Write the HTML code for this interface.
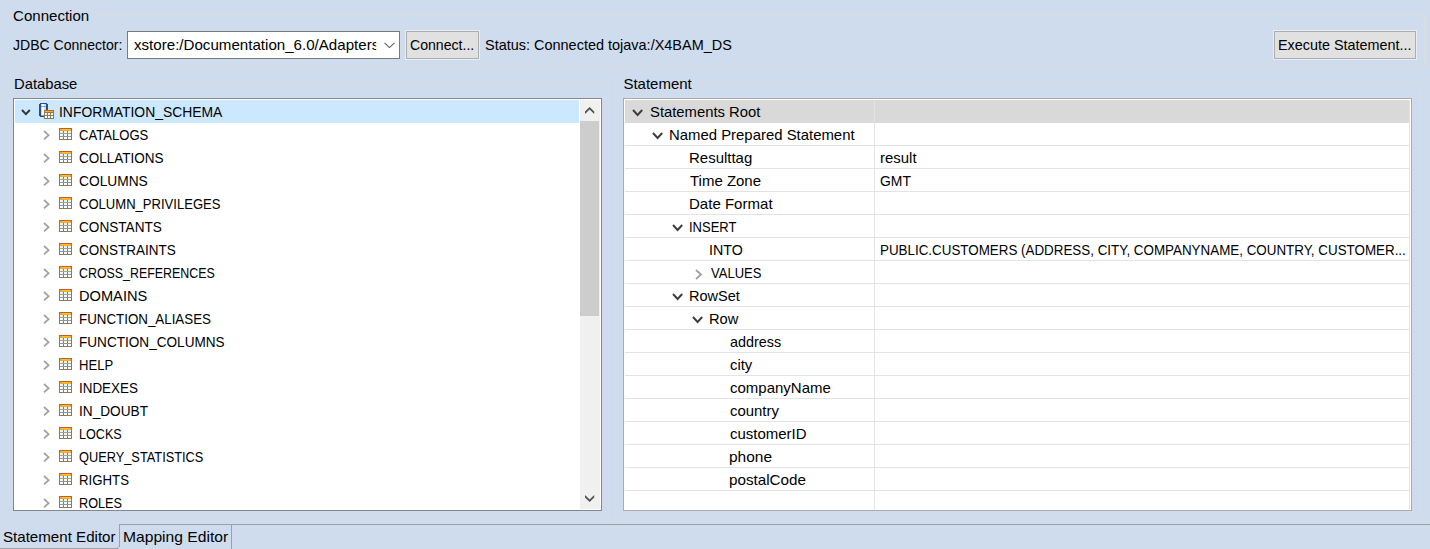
<!DOCTYPE html>
<html><head><meta charset="utf-8"><style>
html,body{margin:0;padding:0;}
body{width:1430px;height:549px;overflow:hidden;position:relative;background:#cedced;font-family:"Liberation Sans",sans-serif;font-size:15px;color:#000;}
div,span,svg{position:absolute;box-sizing:border-box;}
.t{white-space:pre;line-height:23px;height:23px;transform-origin:0 0;}
.gl{background:#dcdcdc;}
</style></head><body>

<div style="left:5px;top:15px;width:8px;height:1px;background:#dcdcdc;"></div>
<div style="left:92px;top:15px;width:1333px;height:1px;background:#dcdcdc;"></div>
<div style="left:5px;top:15px;width:1px;height:52px;background:#dcdcdc;"></div>
<div style="left:1424px;top:15px;width:1px;height:52px;background:#dcdcdc;"></div>
<div style="left:5px;top:66px;width:1420px;height:1px;background:#dcdcdc;"></div>
<div style="left:5px;top:83px;width:8px;height:1px;background:#dcdcdc;"></div>
<div style="left:79px;top:83px;width:531px;height:1px;background:#dcdcdc;"></div>
<div style="left:5px;top:83px;width:1px;height:435px;background:#dcdcdc;"></div>
<div style="left:609px;top:83px;width:1px;height:435px;background:#dcdcdc;"></div>
<div style="left:5px;top:517px;width:605px;height:1px;background:#dcdcdc;"></div>
<div style="left:615px;top:83px;width:7px;height:1px;background:#dcdcdc;"></div>
<div style="left:694px;top:83px;width:726px;height:1px;background:#dcdcdc;"></div>
<div style="left:615px;top:83px;width:1px;height:435px;background:#dcdcdc;"></div>
<div style="left:1419px;top:83px;width:1px;height:435px;background:#dcdcdc;"></div>
<div style="left:615px;top:517px;width:805px;height:1px;background:#dcdcdc;"></div>
<div style="left:127px;top:31px;width:273px;height:28px;background:#fff;border:1px solid #7a7a7a;"></div>
<svg style="left:384px;top:42px" width="11" height="7" viewBox="0 0 11 7"><path d="M0.5 0.8 L5.5 5.6 L10.5 0.8" fill="none" stroke="#606060" stroke-width="1.1"/></svg>
<div style="left:405px;top:30px;width:75px;height:30px;border:1px solid #e9eef4;"></div>
<div style="left:406px;top:31px;width:73px;height:28px;background:#e1e1e1;border:1px solid #adadad;"></div>
<div style="left:1273px;top:30px;width:144px;height:30px;border:1px solid #e9eef4;"></div>
<div style="left:1274px;top:31px;width:142px;height:28px;background:#e1e1e1;border:1px solid #adadad;"></div>
<div style="left:13px;top:98px;width:589px;height:413px;background:#fff;border:1px solid #828790;"></div>
<div style="left:15px;top:100px;width:564px;height:23px;background:#cce8ff;"></div>
<div style="left:580px;top:100px;width:20px;height:409px;background:#f0f0f0;"></div>
<div style="left:580px;top:121px;width:19px;height:195px;background:#cdcdcd;"></div>
<svg style="left:584.8px;top:107px" width="10" height="8" viewBox="0 0 10 8"><polygon points="0,7 4.6,2.6 9.2,7 9.2,4.4 4.6,0 0,4.4" fill="#505050"/></svg>
<svg style="left:584.8px;top:495px" width="10" height="8" viewBox="0 0 10 8"><polygon points="0,0 4.6,4.4 9.2,0 9.2,2.6 4.6,7 0,2.6" fill="#505050"/></svg>
<div style="left:14px;top:99px;width:566px;height:411px;overflow:hidden;">
<svg style="left:5.5px;top:9.2px" width="12" height="8" viewBox="0 0 12 8"><path d="M2 2 L5.9 6.2 L9.8 2" fill="none" stroke="#333" stroke-width="1.9"/></svg>
<svg style="left:25px;top:4px" width="16" height="16" viewBox="0 0 16 16" shape-rendering="crispEdges">
<rect x="0" y="1" width="9" height="12" fill="#2b4c9b"/>
<rect x="1" y="0" width="7" height="14" fill="#2b4c9b"/>
<rect x="2" y="1" width="5" height="12" fill="#c9dbe6"/>
<rect x="3" y="1" width="2" height="12" fill="#ffffff"/>
<rect x="2" y="3" width="5" height="1" fill="#93a9bb"/>
<rect x="2" y="12" width="5" height="1" fill="#7f9fc4"/>
<rect x="5" y="7" width="10" height="9" fill="#8f7a4a"/>
<rect x="5" y="7" width="10" height="1" fill="#b8662a"/>
<rect x="6" y="8" width="8" height="1" fill="#f6b02a"/>
<rect x="6" y="10" width="2" height="2" fill="#eef8fc"/><rect x="9" y="10" width="2" height="2" fill="#eef8fc"/><rect x="12" y="10" width="2" height="2" fill="#eef8fc"/>
<rect x="6" y="13" width="2" height="2" fill="#fff"/><rect x="9" y="13" width="2" height="2" fill="#fff"/><rect x="12" y="13" width="2" height="2" fill="#fff"/>
</svg>
<svg style="left:28.1px;top:30.3px" width="9" height="12" viewBox="0 0 9 12"><path d="M2 2 L6.6 6.2 L2 10.4" fill="none" stroke="#a3a3a3" stroke-width="1.8"/></svg>
<svg style="left:45px;top:29px" width="13" height="12" viewBox="0 0 13 12" shape-rendering="crispEdges">
<rect x="0" y="0" width="13" height="12" fill="#8c7c52"/>
<rect x="1" y="5" width="11" height="1" fill="#b3a274"/>
<rect x="1" y="8" width="11" height="1" fill="#8e94a6"/>
<rect x="0" y="0" width="13" height="1" fill="#c0602a"/>
<rect x="1" y="1" width="11" height="2" fill="#f7a928"/>
<rect x="3" y="1" width="8" height="1" fill="#fbbf3a"/>
<rect x="1" y="3" width="3" height="2" fill="#e4f6fd"/><rect x="5" y="3" width="3" height="2" fill="#e4f6fd"/><rect x="9" y="3" width="3" height="2" fill="#e4f6fd"/>
<rect x="1" y="6" width="3" height="2" fill="#f0f9fc"/><rect x="5" y="6" width="3" height="2" fill="#f0f9fc"/><rect x="9" y="6" width="3" height="2" fill="#f0f9fc"/>
<rect x="1" y="9" width="3" height="2" fill="#fff"/><rect x="5" y="9" width="3" height="2" fill="#fff"/><rect x="9" y="9" width="3" height="2" fill="#fff"/>
</svg>
<svg style="left:28.1px;top:53.3px" width="9" height="12" viewBox="0 0 9 12"><path d="M2 2 L6.6 6.2 L2 10.4" fill="none" stroke="#a3a3a3" stroke-width="1.8"/></svg>
<svg style="left:45px;top:52px" width="13" height="12" viewBox="0 0 13 12" shape-rendering="crispEdges">
<rect x="0" y="0" width="13" height="12" fill="#8c7c52"/>
<rect x="1" y="5" width="11" height="1" fill="#b3a274"/>
<rect x="1" y="8" width="11" height="1" fill="#8e94a6"/>
<rect x="0" y="0" width="13" height="1" fill="#c0602a"/>
<rect x="1" y="1" width="11" height="2" fill="#f7a928"/>
<rect x="3" y="1" width="8" height="1" fill="#fbbf3a"/>
<rect x="1" y="3" width="3" height="2" fill="#e4f6fd"/><rect x="5" y="3" width="3" height="2" fill="#e4f6fd"/><rect x="9" y="3" width="3" height="2" fill="#e4f6fd"/>
<rect x="1" y="6" width="3" height="2" fill="#f0f9fc"/><rect x="5" y="6" width="3" height="2" fill="#f0f9fc"/><rect x="9" y="6" width="3" height="2" fill="#f0f9fc"/>
<rect x="1" y="9" width="3" height="2" fill="#fff"/><rect x="5" y="9" width="3" height="2" fill="#fff"/><rect x="9" y="9" width="3" height="2" fill="#fff"/>
</svg>
<svg style="left:28.1px;top:76.3px" width="9" height="12" viewBox="0 0 9 12"><path d="M2 2 L6.6 6.2 L2 10.4" fill="none" stroke="#a3a3a3" stroke-width="1.8"/></svg>
<svg style="left:45px;top:75px" width="13" height="12" viewBox="0 0 13 12" shape-rendering="crispEdges">
<rect x="0" y="0" width="13" height="12" fill="#8c7c52"/>
<rect x="1" y="5" width="11" height="1" fill="#b3a274"/>
<rect x="1" y="8" width="11" height="1" fill="#8e94a6"/>
<rect x="0" y="0" width="13" height="1" fill="#c0602a"/>
<rect x="1" y="1" width="11" height="2" fill="#f7a928"/>
<rect x="3" y="1" width="8" height="1" fill="#fbbf3a"/>
<rect x="1" y="3" width="3" height="2" fill="#e4f6fd"/><rect x="5" y="3" width="3" height="2" fill="#e4f6fd"/><rect x="9" y="3" width="3" height="2" fill="#e4f6fd"/>
<rect x="1" y="6" width="3" height="2" fill="#f0f9fc"/><rect x="5" y="6" width="3" height="2" fill="#f0f9fc"/><rect x="9" y="6" width="3" height="2" fill="#f0f9fc"/>
<rect x="1" y="9" width="3" height="2" fill="#fff"/><rect x="5" y="9" width="3" height="2" fill="#fff"/><rect x="9" y="9" width="3" height="2" fill="#fff"/>
</svg>
<svg style="left:28.1px;top:99.3px" width="9" height="12" viewBox="0 0 9 12"><path d="M2 2 L6.6 6.2 L2 10.4" fill="none" stroke="#a3a3a3" stroke-width="1.8"/></svg>
<svg style="left:45px;top:98px" width="13" height="12" viewBox="0 0 13 12" shape-rendering="crispEdges">
<rect x="0" y="0" width="13" height="12" fill="#8c7c52"/>
<rect x="1" y="5" width="11" height="1" fill="#b3a274"/>
<rect x="1" y="8" width="11" height="1" fill="#8e94a6"/>
<rect x="0" y="0" width="13" height="1" fill="#c0602a"/>
<rect x="1" y="1" width="11" height="2" fill="#f7a928"/>
<rect x="3" y="1" width="8" height="1" fill="#fbbf3a"/>
<rect x="1" y="3" width="3" height="2" fill="#e4f6fd"/><rect x="5" y="3" width="3" height="2" fill="#e4f6fd"/><rect x="9" y="3" width="3" height="2" fill="#e4f6fd"/>
<rect x="1" y="6" width="3" height="2" fill="#f0f9fc"/><rect x="5" y="6" width="3" height="2" fill="#f0f9fc"/><rect x="9" y="6" width="3" height="2" fill="#f0f9fc"/>
<rect x="1" y="9" width="3" height="2" fill="#fff"/><rect x="5" y="9" width="3" height="2" fill="#fff"/><rect x="9" y="9" width="3" height="2" fill="#fff"/>
</svg>
<svg style="left:28.1px;top:122.3px" width="9" height="12" viewBox="0 0 9 12"><path d="M2 2 L6.6 6.2 L2 10.4" fill="none" stroke="#a3a3a3" stroke-width="1.8"/></svg>
<svg style="left:45px;top:121px" width="13" height="12" viewBox="0 0 13 12" shape-rendering="crispEdges">
<rect x="0" y="0" width="13" height="12" fill="#8c7c52"/>
<rect x="1" y="5" width="11" height="1" fill="#b3a274"/>
<rect x="1" y="8" width="11" height="1" fill="#8e94a6"/>
<rect x="0" y="0" width="13" height="1" fill="#c0602a"/>
<rect x="1" y="1" width="11" height="2" fill="#f7a928"/>
<rect x="3" y="1" width="8" height="1" fill="#fbbf3a"/>
<rect x="1" y="3" width="3" height="2" fill="#e4f6fd"/><rect x="5" y="3" width="3" height="2" fill="#e4f6fd"/><rect x="9" y="3" width="3" height="2" fill="#e4f6fd"/>
<rect x="1" y="6" width="3" height="2" fill="#f0f9fc"/><rect x="5" y="6" width="3" height="2" fill="#f0f9fc"/><rect x="9" y="6" width="3" height="2" fill="#f0f9fc"/>
<rect x="1" y="9" width="3" height="2" fill="#fff"/><rect x="5" y="9" width="3" height="2" fill="#fff"/><rect x="9" y="9" width="3" height="2" fill="#fff"/>
</svg>
<svg style="left:28.1px;top:145.3px" width="9" height="12" viewBox="0 0 9 12"><path d="M2 2 L6.6 6.2 L2 10.4" fill="none" stroke="#a3a3a3" stroke-width="1.8"/></svg>
<svg style="left:45px;top:144px" width="13" height="12" viewBox="0 0 13 12" shape-rendering="crispEdges">
<rect x="0" y="0" width="13" height="12" fill="#8c7c52"/>
<rect x="1" y="5" width="11" height="1" fill="#b3a274"/>
<rect x="1" y="8" width="11" height="1" fill="#8e94a6"/>
<rect x="0" y="0" width="13" height="1" fill="#c0602a"/>
<rect x="1" y="1" width="11" height="2" fill="#f7a928"/>
<rect x="3" y="1" width="8" height="1" fill="#fbbf3a"/>
<rect x="1" y="3" width="3" height="2" fill="#e4f6fd"/><rect x="5" y="3" width="3" height="2" fill="#e4f6fd"/><rect x="9" y="3" width="3" height="2" fill="#e4f6fd"/>
<rect x="1" y="6" width="3" height="2" fill="#f0f9fc"/><rect x="5" y="6" width="3" height="2" fill="#f0f9fc"/><rect x="9" y="6" width="3" height="2" fill="#f0f9fc"/>
<rect x="1" y="9" width="3" height="2" fill="#fff"/><rect x="5" y="9" width="3" height="2" fill="#fff"/><rect x="9" y="9" width="3" height="2" fill="#fff"/>
</svg>
<svg style="left:28.1px;top:168.3px" width="9" height="12" viewBox="0 0 9 12"><path d="M2 2 L6.6 6.2 L2 10.4" fill="none" stroke="#a3a3a3" stroke-width="1.8"/></svg>
<svg style="left:45px;top:167px" width="13" height="12" viewBox="0 0 13 12" shape-rendering="crispEdges">
<rect x="0" y="0" width="13" height="12" fill="#8c7c52"/>
<rect x="1" y="5" width="11" height="1" fill="#b3a274"/>
<rect x="1" y="8" width="11" height="1" fill="#8e94a6"/>
<rect x="0" y="0" width="13" height="1" fill="#c0602a"/>
<rect x="1" y="1" width="11" height="2" fill="#f7a928"/>
<rect x="3" y="1" width="8" height="1" fill="#fbbf3a"/>
<rect x="1" y="3" width="3" height="2" fill="#e4f6fd"/><rect x="5" y="3" width="3" height="2" fill="#e4f6fd"/><rect x="9" y="3" width="3" height="2" fill="#e4f6fd"/>
<rect x="1" y="6" width="3" height="2" fill="#f0f9fc"/><rect x="5" y="6" width="3" height="2" fill="#f0f9fc"/><rect x="9" y="6" width="3" height="2" fill="#f0f9fc"/>
<rect x="1" y="9" width="3" height="2" fill="#fff"/><rect x="5" y="9" width="3" height="2" fill="#fff"/><rect x="9" y="9" width="3" height="2" fill="#fff"/>
</svg>
<svg style="left:28.1px;top:191.3px" width="9" height="12" viewBox="0 0 9 12"><path d="M2 2 L6.6 6.2 L2 10.4" fill="none" stroke="#a3a3a3" stroke-width="1.8"/></svg>
<svg style="left:45px;top:190px" width="13" height="12" viewBox="0 0 13 12" shape-rendering="crispEdges">
<rect x="0" y="0" width="13" height="12" fill="#8c7c52"/>
<rect x="1" y="5" width="11" height="1" fill="#b3a274"/>
<rect x="1" y="8" width="11" height="1" fill="#8e94a6"/>
<rect x="0" y="0" width="13" height="1" fill="#c0602a"/>
<rect x="1" y="1" width="11" height="2" fill="#f7a928"/>
<rect x="3" y="1" width="8" height="1" fill="#fbbf3a"/>
<rect x="1" y="3" width="3" height="2" fill="#e4f6fd"/><rect x="5" y="3" width="3" height="2" fill="#e4f6fd"/><rect x="9" y="3" width="3" height="2" fill="#e4f6fd"/>
<rect x="1" y="6" width="3" height="2" fill="#f0f9fc"/><rect x="5" y="6" width="3" height="2" fill="#f0f9fc"/><rect x="9" y="6" width="3" height="2" fill="#f0f9fc"/>
<rect x="1" y="9" width="3" height="2" fill="#fff"/><rect x="5" y="9" width="3" height="2" fill="#fff"/><rect x="9" y="9" width="3" height="2" fill="#fff"/>
</svg>
<svg style="left:28.1px;top:214.3px" width="9" height="12" viewBox="0 0 9 12"><path d="M2 2 L6.6 6.2 L2 10.4" fill="none" stroke="#a3a3a3" stroke-width="1.8"/></svg>
<svg style="left:45px;top:213px" width="13" height="12" viewBox="0 0 13 12" shape-rendering="crispEdges">
<rect x="0" y="0" width="13" height="12" fill="#8c7c52"/>
<rect x="1" y="5" width="11" height="1" fill="#b3a274"/>
<rect x="1" y="8" width="11" height="1" fill="#8e94a6"/>
<rect x="0" y="0" width="13" height="1" fill="#c0602a"/>
<rect x="1" y="1" width="11" height="2" fill="#f7a928"/>
<rect x="3" y="1" width="8" height="1" fill="#fbbf3a"/>
<rect x="1" y="3" width="3" height="2" fill="#e4f6fd"/><rect x="5" y="3" width="3" height="2" fill="#e4f6fd"/><rect x="9" y="3" width="3" height="2" fill="#e4f6fd"/>
<rect x="1" y="6" width="3" height="2" fill="#f0f9fc"/><rect x="5" y="6" width="3" height="2" fill="#f0f9fc"/><rect x="9" y="6" width="3" height="2" fill="#f0f9fc"/>
<rect x="1" y="9" width="3" height="2" fill="#fff"/><rect x="5" y="9" width="3" height="2" fill="#fff"/><rect x="9" y="9" width="3" height="2" fill="#fff"/>
</svg>
<svg style="left:28.1px;top:237.3px" width="9" height="12" viewBox="0 0 9 12"><path d="M2 2 L6.6 6.2 L2 10.4" fill="none" stroke="#a3a3a3" stroke-width="1.8"/></svg>
<svg style="left:45px;top:236px" width="13" height="12" viewBox="0 0 13 12" shape-rendering="crispEdges">
<rect x="0" y="0" width="13" height="12" fill="#8c7c52"/>
<rect x="1" y="5" width="11" height="1" fill="#b3a274"/>
<rect x="1" y="8" width="11" height="1" fill="#8e94a6"/>
<rect x="0" y="0" width="13" height="1" fill="#c0602a"/>
<rect x="1" y="1" width="11" height="2" fill="#f7a928"/>
<rect x="3" y="1" width="8" height="1" fill="#fbbf3a"/>
<rect x="1" y="3" width="3" height="2" fill="#e4f6fd"/><rect x="5" y="3" width="3" height="2" fill="#e4f6fd"/><rect x="9" y="3" width="3" height="2" fill="#e4f6fd"/>
<rect x="1" y="6" width="3" height="2" fill="#f0f9fc"/><rect x="5" y="6" width="3" height="2" fill="#f0f9fc"/><rect x="9" y="6" width="3" height="2" fill="#f0f9fc"/>
<rect x="1" y="9" width="3" height="2" fill="#fff"/><rect x="5" y="9" width="3" height="2" fill="#fff"/><rect x="9" y="9" width="3" height="2" fill="#fff"/>
</svg>
<svg style="left:28.1px;top:260.3px" width="9" height="12" viewBox="0 0 9 12"><path d="M2 2 L6.6 6.2 L2 10.4" fill="none" stroke="#a3a3a3" stroke-width="1.8"/></svg>
<svg style="left:45px;top:259px" width="13" height="12" viewBox="0 0 13 12" shape-rendering="crispEdges">
<rect x="0" y="0" width="13" height="12" fill="#8c7c52"/>
<rect x="1" y="5" width="11" height="1" fill="#b3a274"/>
<rect x="1" y="8" width="11" height="1" fill="#8e94a6"/>
<rect x="0" y="0" width="13" height="1" fill="#c0602a"/>
<rect x="1" y="1" width="11" height="2" fill="#f7a928"/>
<rect x="3" y="1" width="8" height="1" fill="#fbbf3a"/>
<rect x="1" y="3" width="3" height="2" fill="#e4f6fd"/><rect x="5" y="3" width="3" height="2" fill="#e4f6fd"/><rect x="9" y="3" width="3" height="2" fill="#e4f6fd"/>
<rect x="1" y="6" width="3" height="2" fill="#f0f9fc"/><rect x="5" y="6" width="3" height="2" fill="#f0f9fc"/><rect x="9" y="6" width="3" height="2" fill="#f0f9fc"/>
<rect x="1" y="9" width="3" height="2" fill="#fff"/><rect x="5" y="9" width="3" height="2" fill="#fff"/><rect x="9" y="9" width="3" height="2" fill="#fff"/>
</svg>
<svg style="left:28.1px;top:283.3px" width="9" height="12" viewBox="0 0 9 12"><path d="M2 2 L6.6 6.2 L2 10.4" fill="none" stroke="#a3a3a3" stroke-width="1.8"/></svg>
<svg style="left:45px;top:282px" width="13" height="12" viewBox="0 0 13 12" shape-rendering="crispEdges">
<rect x="0" y="0" width="13" height="12" fill="#8c7c52"/>
<rect x="1" y="5" width="11" height="1" fill="#b3a274"/>
<rect x="1" y="8" width="11" height="1" fill="#8e94a6"/>
<rect x="0" y="0" width="13" height="1" fill="#c0602a"/>
<rect x="1" y="1" width="11" height="2" fill="#f7a928"/>
<rect x="3" y="1" width="8" height="1" fill="#fbbf3a"/>
<rect x="1" y="3" width="3" height="2" fill="#e4f6fd"/><rect x="5" y="3" width="3" height="2" fill="#e4f6fd"/><rect x="9" y="3" width="3" height="2" fill="#e4f6fd"/>
<rect x="1" y="6" width="3" height="2" fill="#f0f9fc"/><rect x="5" y="6" width="3" height="2" fill="#f0f9fc"/><rect x="9" y="6" width="3" height="2" fill="#f0f9fc"/>
<rect x="1" y="9" width="3" height="2" fill="#fff"/><rect x="5" y="9" width="3" height="2" fill="#fff"/><rect x="9" y="9" width="3" height="2" fill="#fff"/>
</svg>
<svg style="left:28.1px;top:306.3px" width="9" height="12" viewBox="0 0 9 12"><path d="M2 2 L6.6 6.2 L2 10.4" fill="none" stroke="#a3a3a3" stroke-width="1.8"/></svg>
<svg style="left:45px;top:305px" width="13" height="12" viewBox="0 0 13 12" shape-rendering="crispEdges">
<rect x="0" y="0" width="13" height="12" fill="#8c7c52"/>
<rect x="1" y="5" width="11" height="1" fill="#b3a274"/>
<rect x="1" y="8" width="11" height="1" fill="#8e94a6"/>
<rect x="0" y="0" width="13" height="1" fill="#c0602a"/>
<rect x="1" y="1" width="11" height="2" fill="#f7a928"/>
<rect x="3" y="1" width="8" height="1" fill="#fbbf3a"/>
<rect x="1" y="3" width="3" height="2" fill="#e4f6fd"/><rect x="5" y="3" width="3" height="2" fill="#e4f6fd"/><rect x="9" y="3" width="3" height="2" fill="#e4f6fd"/>
<rect x="1" y="6" width="3" height="2" fill="#f0f9fc"/><rect x="5" y="6" width="3" height="2" fill="#f0f9fc"/><rect x="9" y="6" width="3" height="2" fill="#f0f9fc"/>
<rect x="1" y="9" width="3" height="2" fill="#fff"/><rect x="5" y="9" width="3" height="2" fill="#fff"/><rect x="9" y="9" width="3" height="2" fill="#fff"/>
</svg>
<svg style="left:28.1px;top:329.3px" width="9" height="12" viewBox="0 0 9 12"><path d="M2 2 L6.6 6.2 L2 10.4" fill="none" stroke="#a3a3a3" stroke-width="1.8"/></svg>
<svg style="left:45px;top:328px" width="13" height="12" viewBox="0 0 13 12" shape-rendering="crispEdges">
<rect x="0" y="0" width="13" height="12" fill="#8c7c52"/>
<rect x="1" y="5" width="11" height="1" fill="#b3a274"/>
<rect x="1" y="8" width="11" height="1" fill="#8e94a6"/>
<rect x="0" y="0" width="13" height="1" fill="#c0602a"/>
<rect x="1" y="1" width="11" height="2" fill="#f7a928"/>
<rect x="3" y="1" width="8" height="1" fill="#fbbf3a"/>
<rect x="1" y="3" width="3" height="2" fill="#e4f6fd"/><rect x="5" y="3" width="3" height="2" fill="#e4f6fd"/><rect x="9" y="3" width="3" height="2" fill="#e4f6fd"/>
<rect x="1" y="6" width="3" height="2" fill="#f0f9fc"/><rect x="5" y="6" width="3" height="2" fill="#f0f9fc"/><rect x="9" y="6" width="3" height="2" fill="#f0f9fc"/>
<rect x="1" y="9" width="3" height="2" fill="#fff"/><rect x="5" y="9" width="3" height="2" fill="#fff"/><rect x="9" y="9" width="3" height="2" fill="#fff"/>
</svg>
<svg style="left:28.1px;top:352.3px" width="9" height="12" viewBox="0 0 9 12"><path d="M2 2 L6.6 6.2 L2 10.4" fill="none" stroke="#a3a3a3" stroke-width="1.8"/></svg>
<svg style="left:45px;top:351px" width="13" height="12" viewBox="0 0 13 12" shape-rendering="crispEdges">
<rect x="0" y="0" width="13" height="12" fill="#8c7c52"/>
<rect x="1" y="5" width="11" height="1" fill="#b3a274"/>
<rect x="1" y="8" width="11" height="1" fill="#8e94a6"/>
<rect x="0" y="0" width="13" height="1" fill="#c0602a"/>
<rect x="1" y="1" width="11" height="2" fill="#f7a928"/>
<rect x="3" y="1" width="8" height="1" fill="#fbbf3a"/>
<rect x="1" y="3" width="3" height="2" fill="#e4f6fd"/><rect x="5" y="3" width="3" height="2" fill="#e4f6fd"/><rect x="9" y="3" width="3" height="2" fill="#e4f6fd"/>
<rect x="1" y="6" width="3" height="2" fill="#f0f9fc"/><rect x="5" y="6" width="3" height="2" fill="#f0f9fc"/><rect x="9" y="6" width="3" height="2" fill="#f0f9fc"/>
<rect x="1" y="9" width="3" height="2" fill="#fff"/><rect x="5" y="9" width="3" height="2" fill="#fff"/><rect x="9" y="9" width="3" height="2" fill="#fff"/>
</svg>
<svg style="left:28.1px;top:375.3px" width="9" height="12" viewBox="0 0 9 12"><path d="M2 2 L6.6 6.2 L2 10.4" fill="none" stroke="#a3a3a3" stroke-width="1.8"/></svg>
<svg style="left:45px;top:374px" width="13" height="12" viewBox="0 0 13 12" shape-rendering="crispEdges">
<rect x="0" y="0" width="13" height="12" fill="#8c7c52"/>
<rect x="1" y="5" width="11" height="1" fill="#b3a274"/>
<rect x="1" y="8" width="11" height="1" fill="#8e94a6"/>
<rect x="0" y="0" width="13" height="1" fill="#c0602a"/>
<rect x="1" y="1" width="11" height="2" fill="#f7a928"/>
<rect x="3" y="1" width="8" height="1" fill="#fbbf3a"/>
<rect x="1" y="3" width="3" height="2" fill="#e4f6fd"/><rect x="5" y="3" width="3" height="2" fill="#e4f6fd"/><rect x="9" y="3" width="3" height="2" fill="#e4f6fd"/>
<rect x="1" y="6" width="3" height="2" fill="#f0f9fc"/><rect x="5" y="6" width="3" height="2" fill="#f0f9fc"/><rect x="9" y="6" width="3" height="2" fill="#f0f9fc"/>
<rect x="1" y="9" width="3" height="2" fill="#fff"/><rect x="5" y="9" width="3" height="2" fill="#fff"/><rect x="9" y="9" width="3" height="2" fill="#fff"/>
</svg>
<svg style="left:28.1px;top:398.3px" width="9" height="12" viewBox="0 0 9 12"><path d="M2 2 L6.6 6.2 L2 10.4" fill="none" stroke="#a3a3a3" stroke-width="1.8"/></svg>
<svg style="left:45px;top:397px" width="13" height="12" viewBox="0 0 13 12" shape-rendering="crispEdges">
<rect x="0" y="0" width="13" height="12" fill="#8c7c52"/>
<rect x="1" y="5" width="11" height="1" fill="#b3a274"/>
<rect x="1" y="8" width="11" height="1" fill="#8e94a6"/>
<rect x="0" y="0" width="13" height="1" fill="#c0602a"/>
<rect x="1" y="1" width="11" height="2" fill="#f7a928"/>
<rect x="3" y="1" width="8" height="1" fill="#fbbf3a"/>
<rect x="1" y="3" width="3" height="2" fill="#e4f6fd"/><rect x="5" y="3" width="3" height="2" fill="#e4f6fd"/><rect x="9" y="3" width="3" height="2" fill="#e4f6fd"/>
<rect x="1" y="6" width="3" height="2" fill="#f0f9fc"/><rect x="5" y="6" width="3" height="2" fill="#f0f9fc"/><rect x="9" y="6" width="3" height="2" fill="#f0f9fc"/>
<rect x="1" y="9" width="3" height="2" fill="#fff"/><rect x="5" y="9" width="3" height="2" fill="#fff"/><rect x="9" y="9" width="3" height="2" fill="#fff"/>
</svg>
</div>
<div style="left:623px;top:98px;width:789px;height:413px;background:#fff;border:1px solid #ababab;"></div>
<div style="left:624px;top:99px;width:787px;height:411px;overflow:hidden;">
<div style="left:1px;top:1px;width:784px;height:23px;background:#d9d9d9;"></div>
<div style="left:1px;top:46px;width:785px;height:1px;background:#e3e3e3;"></div>
<div style="left:1px;top:69px;width:785px;height:1px;background:#e3e3e3;"></div>
<div style="left:1px;top:92px;width:785px;height:1px;background:#e3e3e3;"></div>
<div style="left:1px;top:115px;width:785px;height:1px;background:#e3e3e3;"></div>
<div style="left:1px;top:138px;width:785px;height:1px;background:#e3e3e3;"></div>
<div style="left:1px;top:161px;width:785px;height:1px;background:#e3e3e3;"></div>
<div style="left:1px;top:184px;width:785px;height:1px;background:#e3e3e3;"></div>
<div style="left:1px;top:207px;width:785px;height:1px;background:#e3e3e3;"></div>
<div style="left:1px;top:230px;width:785px;height:1px;background:#e3e3e3;"></div>
<div style="left:1px;top:253px;width:785px;height:1px;background:#e3e3e3;"></div>
<div style="left:1px;top:276px;width:785px;height:1px;background:#e3e3e3;"></div>
<div style="left:1px;top:299px;width:785px;height:1px;background:#e3e3e3;"></div>
<div style="left:1px;top:322px;width:785px;height:1px;background:#e3e3e3;"></div>
<div style="left:1px;top:345px;width:785px;height:1px;background:#e3e3e3;"></div>
<div style="left:1px;top:368px;width:785px;height:1px;background:#e3e3e3;"></div>
<div style="left:1px;top:391px;width:785px;height:1px;background:#e3e3e3;"></div>
<div style="left:1px;top:414px;width:785px;height:1px;background:#e3e3e3;"></div>
<div style="left:250px;top:1px;width:1px;height:411px;background:#e3e3e3;"></div>
<div style="left:785px;top:1px;width:1px;height:409px;background:#e3e3e3;"></div>
<svg style="left:6.9px;top:8.5px" width="13" height="9" viewBox="0 0 13 9"><path d="M2 2 L6.6 7.0 L11.2 2" fill="none" stroke="#3c3c3c" stroke-width="1.9"/></svg>
<svg style="left:26.9px;top:31.5px" width="13" height="9" viewBox="0 0 13 9"><path d="M2 2 L6.6 7.0 L11.2 2" fill="none" stroke="#3c3c3c" stroke-width="1.9"/></svg>
<svg style="left:46.9px;top:123.5px" width="13" height="9" viewBox="0 0 13 9"><path d="M2 2 L6.6 7.0 L11.2 2" fill="none" stroke="#3c3c3c" stroke-width="1.9"/></svg>
<svg style="left:69.8px;top:168.9px" width="9" height="13" viewBox="0 0 9 13"><path d="M2 2 L7.0 6.5 L2 11.0" fill="none" stroke="#a3a3a3" stroke-width="1.9"/></svg>
<svg style="left:46.9px;top:192.5px" width="13" height="9" viewBox="0 0 13 9"><path d="M2 2 L6.6 7.0 L11.2 2" fill="none" stroke="#3c3c3c" stroke-width="1.9"/></svg>
<svg style="left:66.9px;top:215.5px" width="13" height="9" viewBox="0 0 13 9"><path d="M2 2 L6.6 7.0 L11.2 2" fill="none" stroke="#3c3c3c" stroke-width="1.9"/></svg>
</div>
<div style="left:119px;top:524px;width:1311px;height:1px;background:#a0a0a0;"></div>
<div style="left:0px;top:548px;width:118px;height:1px;background:#a0a0a0;"></div>
<div style="left:119px;top:524px;width:1px;height:23px;background:#a0a0a0;"></div>
<div style="left:117px;top:546px;width:3px;height:3px;"><svg style="left:0;top:0" width="3" height="3"><path d="M0 2.5 L2.5 0" stroke="#a0a0a0" stroke-width="1"/></svg></div>
<div style="left:231px;top:525px;width:1px;height:25px;background:#a0a0a0;"></div>
<span class="t" style="left:13.20px;top:4.3px;transform:scaleX(1.0040);">Connection</span>
<span class="t" style="left:13.31px;top:33.0px;transform:scaleX(0.9366);">JDBC Connector:</span>
<span class="t" style="left:133.80px;top:32.8px;transform:scaleX(1.0074);clip-path:inset(0 3.05px 0 0);">xstore:/Documentation_6.0/Adapters</span>
<span class="t" style="left:410.45px;top:33.0px;transform:scaleX(0.9396);">Connect...</span>
<span class="t" style="left:484.53px;top:33.0px;transform:scaleX(0.9643);">Status: Connected tojava:/X4BAM_DS</span>
<span class="t" style="left:1278.45px;top:33.0px;transform:scaleX(0.9590);">Execute Statement...</span>
<span class="t" style="left:13.52px;top:72.2px;transform:scaleX(0.9856);">Database</span>
<span class="t" style="left:623.40px;top:72.2px;transform:scaleX(1.0000);">Statement</span>
<span class="t" style="left:3.49px;top:525.3px;transform:scaleX(1.0072);">Statement Editor</span>
<span class="t" style="left:122.95px;top:525.3px;transform:scaleX(1.0422);">Mapping Editor</span>
<span class="t" style="left:58.50px;top:100.0px;transform:scaleX(0.9262);">INFORMATION_SCHEMA</span>
<span class="t" style="left:79.30px;top:123.0px;transform:scaleX(0.8718);">CATALOGS</span>
<span class="t" style="left:79.28px;top:146.0px;transform:scaleX(0.9004);">COLLATIONS</span>
<span class="t" style="left:79.27px;top:169.0px;transform:scaleX(0.9170);">COLUMNS</span>
<span class="t" style="left:79.30px;top:192.0px;transform:scaleX(0.8703);">COLUMN_PRIVILEGES</span>
<span class="t" style="left:79.27px;top:215.0px;transform:scaleX(0.9066);">CONSTANTS</span>
<span class="t" style="left:79.28px;top:238.0px;transform:scaleX(0.8991);">CONSTRAINTS</span>
<span class="t" style="left:79.34px;top:261.0px;transform:scaleX(0.8267);">CROSS_REFERENCES</span>
<span class="t" style="left:78.83px;top:284.0px;transform:scaleX(0.9750);">DOMAINS</span>
<span class="t" style="left:78.93px;top:307.0px;transform:scaleX(0.8894);">FUNCTION_ALIASES</span>
<span class="t" style="left:78.91px;top:330.0px;transform:scaleX(0.9056);">FUNCTION_COLUMNS</span>
<span class="t" style="left:78.95px;top:353.0px;transform:scaleX(0.8710);">HELP</span>
<span class="t" style="left:78.75px;top:376.0px;transform:scaleX(0.8934);">INDEXES</span>
<span class="t" style="left:78.73px;top:399.0px;transform:scaleX(0.9096);">IN_DOUBT</span>
<span class="t" style="left:78.99px;top:422.0px;transform:scaleX(0.8408);">LOCKS</span>
<span class="t" style="left:79.40px;top:445.0px;transform:scaleX(0.8526);">QUERY_STATISTICS</span>
<span class="t" style="left:78.94px;top:468.0px;transform:scaleX(0.8814);">RIGHTS</span>
<span class="t" style="left:78.98px;top:491.0px;transform:scaleX(0.8469);">ROLES</span>
<span class="t" style="left:649.71px;top:100.0px;transform:scaleX(0.9883);">Statements Root</span>
<span class="t" style="left:669.31px;top:123.0px;transform:scaleX(0.9935);">Named Prepared Statement</span>
<span class="t" style="left:689.20px;top:146.0px;transform:scaleX(0.9984);">Resulttag</span>
<span class="t" style="left:690.10px;top:169.0px;transform:scaleX(0.9986);">Time Zone</span>
<span class="t" style="left:689.20px;top:192.0px;transform:scaleX(1.0024);">Date Format</span>
<span class="t" style="left:689.19px;top:215.0px;transform:scaleX(0.8660);">INSERT</span>
<span class="t" style="left:709.47px;top:238.0px;transform:scaleX(0.9493);">INTO</span>
<span class="t" style="left:710.71px;top:261.0px;transform:scaleX(0.8674);">VALUES</span>
<span class="t" style="left:689.14px;top:284.0px;transform:scaleX(0.9688);">RowSet</span>
<span class="t" style="left:709.33px;top:307.0px;transform:scaleX(0.9792);">Row</span>
<span class="t" style="left:730.22px;top:330.0px;transform:scaleX(0.9598);">address</span>
<span class="t" style="left:730.21px;top:353.0px;transform:scaleX(0.9909);">city</span>
<span class="t" style="left:730.20px;top:376.0px;transform:scaleX(0.9990);">companyName</span>
<span class="t" style="left:729.80px;top:399.0px;transform:scaleX(0.9938);">country</span>
<span class="t" style="left:729.80px;top:422.0px;transform:scaleX(0.9987);">customerID</span>
<span class="t" style="left:729.37px;top:445.0px;transform:scaleX(1.0324);">phone</span>
<span class="t" style="left:729.39px;top:468.0px;transform:scaleX(1.0148);">postalCode</span>
<span class="t" style="left:879.50px;top:146.0px;transform:scaleX(0.9972);">result</span>
<span class="t" style="left:879.85px;top:169.0px;transform:scaleX(0.9288);">GMT</span>
<span class="t" style="left:879.73px;top:238.0px;transform:scaleX(0.8923);">PUBLIC.CUSTOMERS (ADDRESS, CITY, COMPANYNAME, COUNTRY, CUSTOMER...</span>
</body></html>
